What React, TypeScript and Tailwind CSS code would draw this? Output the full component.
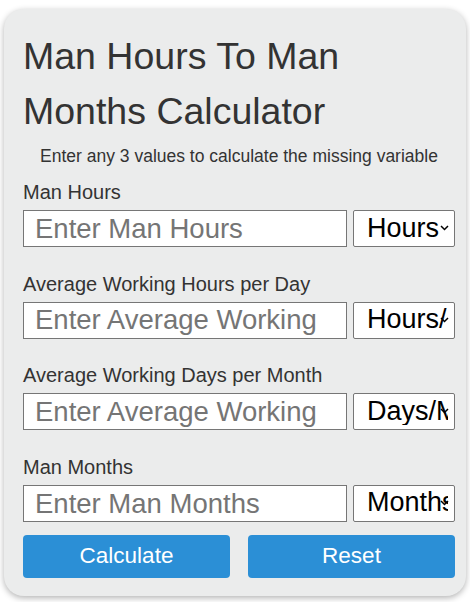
import React from 'react';

const fields = [
  { label: 'Man Hours', placeholder: 'Enter Man Hours', unit: 'Hours' },
  { label: 'Average Working Hours per Day', placeholder: 'Enter Average Working Hours per Day', unit: 'Hours/Day' },
  { label: 'Average Working Days per Month', placeholder: 'Enter Average Working Days per Month', unit: 'Days/Month' },
  { label: 'Man Months', placeholder: 'Enter Man Months', unit: 'Months' },
];

const App: React.FC = () => {
  return (
    <div className="min-h-screen bg-white pt-[9px] pl-[4px]" style={{ fontFamily: '"Liberation Sans", Arial, sans-serif' }}>
      <div className="w-[462px] bg-[#ebecec] rounded-[20px] pt-[20px] pl-[19px] pr-[11px] pb-[18px] shadow-[0_2px_6px_rgba(0,0,0,0.3)]">
        <h1 className="text-[37.5px] leading-[55px] text-[#333] font-normal">Man Hours To Man Months Calculator</h1>
        <p className="text-center text-[17.5px] leading-[20px] text-[#333] mt-[7px]">Enter any 3 values to calculate the missing variable</p>
        <div className="mt-[15px]">
          {fields.map((f, i) => (
            <div key={f.label} className={i > 0 ? 'mt-[25.6px]' : ''}>
              <label className="block text-[20px] leading-[23px] text-[#333]">{f.label}</label>
              <div className="flex gap-[6px] mt-[6px]">
                <input
                  className="w-[324px] h-[37px] bg-white border border-[#767676] pl-[11px] pr-[23px] text-[27.5px] placeholder:text-[#757575] outline-none"
                  placeholder={f.placeholder}
                />
                <div className="relative w-[102px] h-[37px]">
                  <select className="appearance-none w-full h-full bg-white border border-[#767676] rounded-[2px] pl-[13px] pr-[6px] pt-0 pb-[2px] leading-[28px] text-[27px] text-black outline-none">
                    <option>{f.unit}</option>
                  </select>
                  <svg className="pointer-events-none absolute right-[6px] top-[15px]" width="9" height="6" viewBox="0 0 9 6">
                    <path d="M1 1l3.5 3.5L8 1" fill="none" stroke="#000" strokeWidth="1.5" />
                  </svg>
                </div>
              </div>
            </div>
          ))}
        </div>
        <div className="flex gap-[18px] mt-[13px]">
          <button className="w-[207px] h-[43px] bg-[#2b8fd6] text-white text-[22.5px] rounded-[4px]">Calculate</button>
          <button className="w-[207px] h-[43px] bg-[#2b8fd6] text-white text-[22.5px] rounded-[4px]">Reset</button>
        </div>
      </div>
    </div>
  );
};

export default App;
